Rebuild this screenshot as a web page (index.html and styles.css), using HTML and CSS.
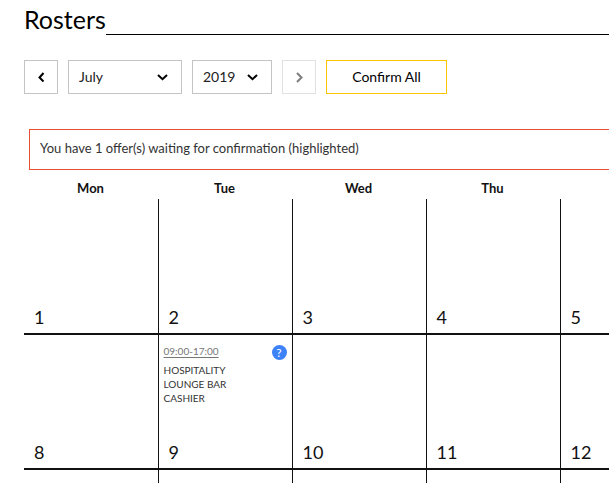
FILE: index.html
```html
<!DOCTYPE html>
<html lang="en">
<head>
    <meta charset="UTF-8">
    <meta name="viewport" content="width=device-width, initial-scale=1.0">
    <title>Rosters</title>
    <link rel="stylesheet" href="styles.css">
</head>
<body>
    <main class="page">
        <header class="page-header">
            <h1>Rosters</h1>
        </header>

        <form class="toolbar">
            <button type="button" class="btn btn-arrow" aria-label="Previous month">
                <svg width="12" height="12" viewBox="0 0 12 12"><path d="M8.500 2L4.500 6.500l4 4"/></svg>
            </button>
            <div class="select-box month">
                <select id="month" aria-label="Month">
                    <option>June</option>
                    <option selected>July</option>
                    <option>August</option>
                </select>
                <svg width="12" height="12" viewBox="0 0 12 12"><path d="M2 4L6.500 8.200 11 4"/></svg>
            </div>
            <div class="select-box year">
                <select id="year" aria-label="Year">
                    <option>2018</option>
                    <option selected>2019</option>
                </select>
                <svg width="12" height="12" viewBox="0 0 12 12"><path d="M2 4L6.500 8.200 11 4"/></svg>
            </div>
            <button type="button" class="btn btn-arrow" aria-label="Next month" disabled>
                <svg width="12" height="12" viewBox="0 0 12 12"><path d="M4 2l4.500 4.500L4 11"/></svg>
            </button>
            <button type="button" class="btn btn-confirm">Confirm All</button>
        </form>

        <div class="notice">You have 1 offer(s) waiting for confirmation (highlighted)</div>

        <table class="calendar">
            <colgroup>
                <col class="col-day">
                <col class="col-day">
                <col class="col-day">
                <col class="col-day">
                <col>
            </colgroup>
            <thead>
                <tr>
                    <th>Mon</th>
                    <th>Tue</th>
                    <th>Wed</th>
                    <th>Thu</th>
                    <th></th>
                </tr>
            </thead>
            <tbody>
                <tr>
                    <td><span class="day">1</span></td>
                    <td><span class="day">2</span></td>
                    <td><span class="day">3</span></td>
                    <td><span class="day">4</span></td>
                    <td><span class="day">5</span></td>
                </tr>
                <tr>
                    <td><span class="day">8</span></td>
                    <td>
                        <div class="cell">
                            <div class="shift">
                                <div class="shift-head">
                                    <a href="#">09:00-17:00</a>
                                    <span class="badge">?</span>
                                </div>
                                <p>HOSPITALITY LOUNGE BAR CASHIER</p>
                            </div>
                            <span class="day">9</span>
                        </div>
                    </td>
                    <td><span class="day">10</span></td>
                    <td><span class="day">11</span></td>
                    <td><span class="day">12</span></td>
                </tr>
                <tr class="week-next">
                    <td></td>
                    <td></td>
                    <td></td>
                    <td></td>
                    <td></td>
                </tr>
            </tbody>
        </table>
    </main>
</body>
</html>
```

FILE: styles.css
```css
* {
    box-sizing: border-box;
}

body {
    margin: 0;
    font-family: Lato, "Liberation Sans", sans-serif;
    font-size: 13px;
    color: #111;
    background: #fff;
}

.page {
    padding: 5px 0 0 24px;
}

.page-header {
    display: flex;
    height: 30px;
}

.page-header::after {
    content: "";
    flex: 1;
    border-bottom: 1px solid #000;
}

h1 {
    margin: 0;
    font-size: 25px;
    font-weight: 400;
    line-height: 28px;
    color: #000;
}

.toolbar {
    display: flex;
    gap: 10px;
    margin-top: 25px;
}

.btn {
    display: flex;
    align-items: center;
    justify-content: center;
    height: 34px;
    padding: 0;
    font: inherit;
    font-size: 14px;
    color: #000;
    background: #fff;
    border: 1px solid #c4c4c4;
    cursor: pointer;
}

.btn-arrow {
    width: 34px;
}

.btn:disabled {
    opacity: 0.5;
    cursor: default;
}

.btn-confirm {
    width: 121px;
    padding-bottom: 2px;
    border-color: #fdc400;
}

.toolbar svg {
    fill: none;
    stroke: #000;
    stroke-width: 2;
}

.select-box {
    display: grid;
    align-items: center;
    height: 34px;
}

.select-box > * {
    grid-area: 1 / 1;
}

.select-box svg {
    justify-self: end;
    margin-right: 14px;
    pointer-events: none;
}

.month {
    width: 114px;
}

.year {
    width: 80px;
}

select {
    appearance: none;
    width: 100%;
    height: 34px;
    padding: 0 10px 2px;
    font: inherit;
    font-size: 14px;
    color: #222;
    background: #fff;
    border: 1px solid #c4c4c4;
    border-radius: 0;
}

.notice {
    margin: 35px 0 0 5px;
    padding: 9px 10px 11px;
    border: 1px solid #e8502f;
    border-right: 0;
    line-height: 19px;
    color: #333;
}

.calendar {
    width: 100%;
    margin-top: 8px;
    border-collapse: collapse;
    table-layout: fixed;
}

.col-day {
    width: 134px;
}

.calendar th {
    height: 21px;
    padding: 0 1px 1px 0;
    font-weight: 700;
    line-height: 20px;
    vertical-align: top;
}

.calendar td {
    height: 135px;
    padding: 0;
    vertical-align: bottom;
    border-left: 1px solid #111;
    border-bottom: 2px solid #111;
}

.calendar td:first-child {
    border-left: 0;
}

.calendar .week-next td {
    height: 14px;
    border-bottom: 0;
}

.day {
    display: block;
    padding: 0 10px 5px;
    font-size: 18px;
    line-height: 22px;
}

.cell {
    display: flex;
    flex-direction: column;
    justify-content: space-between;
    height: 133px;
}

.shift {
    padding: 9px 5px 0;
    font-size: 10px;
    line-height: 14px;
    color: #333;
}

.shift-head {
    display: flex;
    justify-content: space-between;
}

.shift a {
    color: #777;
    text-underline-offset: 2px;
}

.shift p {
    width: 80px;
    margin: 3px 0 0;
}

.badge {
    width: 15px;
    height: 15px;
    margin-top: 1px;
    border-radius: 50%;
    font-size: 12px;
    line-height: 15px;
    text-align: center;
    color: #fff;
    background: #3d82f7;
}
```
